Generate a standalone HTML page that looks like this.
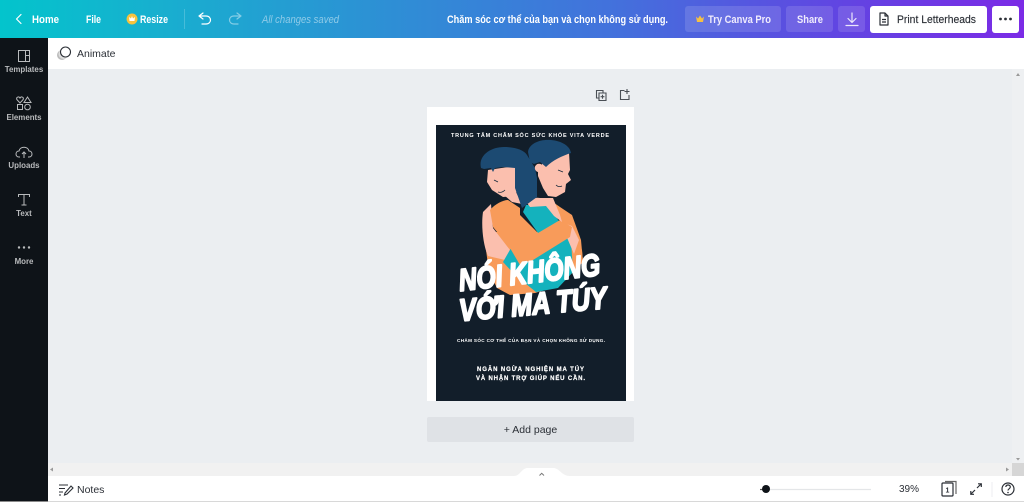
<!DOCTYPE html>
<html lang="vi"><head><meta charset="utf-8"><title>Canva</title>
<style>
html,body{margin:0;padding:0;width:1024px;height:502px;overflow:hidden;background:#ebeef1;font-family:"Liberation Sans","DejaVu Sans",sans-serif}
div,span{position:absolute;white-space:nowrap}
#top{left:0;top:0;width:1024px;height:38px;background:linear-gradient(90deg,#03c4cc 0%,#17b0cf 15%,#2b93d4 35%,#4371dc 60%,#6145e2 82%,#7b2be6 100%)}
.btn{top:6px;height:26px;border-radius:3px;background:rgba(255,255,255,.13)}
.wb{top:6px;height:27px;border-radius:3px;background:#fff}
.side{left:0;width:48px;text-align:center;color:#b9bbbd;font-size:7.9px;font-weight:bold;line-height:10px}
</style></head><body>
<div id="top"></div>
<div style="left:184px;top:9px;width:1px;height:20px;background:rgba(255,255,255,.2)"></div>
<div class="btn" style="left:685px;width:96px"></div>
<div class="btn" style="left:786px;width:47px"></div>
<div class="btn" style="left:838px;width:27px"></div>
<div class="wb" style="left:870px;width:117px"></div>
<div class="wb" style="left:992px;width:27px"></div>

<div style="left:0;top:38px;width:48px;height:464px;background:#0e1318"></div>
<div style="left:48px;top:38px;width:976px;height:31px;background:#fff"></div>
<div style="left:77px;top:47px;font-size:10.5px;line-height:14px;color:#2b2f36">Animate</div>

<div class="side" style="top:65px">Templates</div>
<div class="side" style="top:113px">Elements</div>
<div class="side" style="top:161px">Uploads</div>
<div class="side" style="top:209px">Text</div>
<div class="side" style="top:257px">More</div>

<div style="left:427px;top:107px;width:207px;height:294px;background:#fff"></div>
<div style="left:436px;top:125px;width:190px;height:276px;background:#121e2a"></div>
<div style="left:427px;top:417px;width:207px;height:25px;background:#dfe2e6;border-radius:2px"></div>
<div style="left:427px;top:423px;width:207px;text-align:center;font-size:10.5px;line-height:14px;color:#2b2f36">+ Add page</div>

<div style="left:48px;top:463px;width:976px;height:13px;background:#f1f1f1"></div>
<div style="left:1012px;top:69px;width:12px;height:394px;background:#eef0f2"></div>
<div style="left:1012px;top:463px;width:12px;height:13px;background:#d6d6d6"></div>
<div style="left:48px;top:476px;width:976px;height:25px;background:#fff"></div>
<div style="left:0;top:501px;width:48px;height:1px;background:#8a8a8a"></div>
<div style="left:48px;top:501px;width:976px;height:1px;background:#d8d8d8"></div>
<div style="left:77px;top:483px;font-size:10.5px;line-height:14px;color:#2b2f36">Notes</div>
<div style="left:899px;top:483px;font-size:10px;line-height:14px;color:#2b2f36">39%</div>

<svg style="position:absolute;left:0;top:0" width="1024" height="502" viewBox="0 0 1024 502">
 <!-- header text -->
 <g font-family="Liberation Sans" font-size="11" font-weight="bold" fill="#fff">
  <text x="32" y="23" textLength="27" lengthAdjust="spacingAndGlyphs">Home</text>
  <text x="86" y="23" textLength="15" lengthAdjust="spacingAndGlyphs">File</text>
  <text x="140" y="23" textLength="28" lengthAdjust="spacingAndGlyphs">Resize</text>
  <text x="447" y="23" textLength="221" lengthAdjust="spacingAndGlyphs">Chăm sóc cơ thể của bạn và chọn không sử dụng.</text>
  <text x="708" y="23" textLength="63" lengthAdjust="spacingAndGlyphs" fill="#f0ecfd">Try Canva Pro</text>
  <text x="797" y="23" textLength="26" lengthAdjust="spacingAndGlyphs" fill="#f0ecfd">Share</text>
 </g>
 <text x="262" y="23" font-family="Liberation Sans" font-size="11" font-style="italic" fill="#8fcbe8" textLength="77" lengthAdjust="spacingAndGlyphs">All changes saved</text>
 <text x="897" y="23" font-family="Liberation Sans" font-size="11" fill="#2b2f36" stroke="#2b2f36" stroke-width=".15" textLength="79" lengthAdjust="spacingAndGlyphs">Print Letterheads</text>
 <!-- header icons -->
 <g fill="none" stroke="#fff" stroke-width="1.200" stroke-linecap="round" stroke-linejoin="round">
  <path d="M21,14.500 L16.500,19 L21,23.500"/>
  <path d="M199,16 L203,13 M199,16 L203,19 M199,16 H206 C212,16 212,24 206,24 H202"/>
  <path opacity=".45" d="M241,16 L237,13 M241,16 L237,19 M241,16 H234 C228,16 228,24 234,24 H238"/>
  <path opacity=".85" d="M852,13 V22 M848,18.500 L852,22.500 L856,18.500 M846,25.500 H858"/>
 </g>
 <circle cx="132" cy="19" r="5.500" fill="#f6c33e"/><path d="M129.500,21 L129,17 L131,18.500 L132,16 L133,18.500 L135,17 L134.500,21 Z" fill="#fff"/>
 <path d="M696,16.500 L698,18.500 L700,15.500 L702,18.500 L704,16.500 L703,22 H697 Z" fill="#f5c044"/>
 <g fill="none" stroke="#2b2f36" stroke-width="1.200" stroke-linejoin="round">
  <path d="M880,13 H885 L888,16 V25 H880 Z M885,13 V16 H888"/><path d="M882,19.500 H886 M882,22 H886"/>
 </g>
 <circle cx="1000.500" cy="19" r="1.400" fill="#2b2f36"/><circle cx="1005.500" cy="19" r="1.400" fill="#2b2f36"/><circle cx="1010.500" cy="19" r="1.400" fill="#2b2f36"/>
 <!-- animate icon -->
 <circle cx="62" cy="55" r="5" fill="#bbb"/><circle cx="63.500" cy="54" r="5" fill="#ddd"/>
 <circle cx="65.500" cy="52" r="5" fill="#fff" stroke="#2b2f36" stroke-width="1.100"/>
 <!-- sidebar icons -->
 <g fill="none" stroke="#b9bbbd" stroke-width="1">
  <path d="M18.500,50.500 H29.500 V61.500 H18.500 Z M25.500,50.500 V61.500 M25.500,55.500 H29.500"/>
  <path d="M20,103 L16.800,99.500 C16,97 19,96 20,98 C21,96 24,97 23.200,99.500 Z"/>
  <path d="M27.500,97 L31,102.500 H24 Z"/>
  <path d="M17.500,104.500 H22.500 V109.500 H17.500 Z"/><circle cx="27.500" cy="107" r="2.800"/>
  <path d="M20,157 H19 C15,157 15,151 19,151 C20,146 28,146 29,151 C33,151 33,157 29,157 H28"/>
  <path d="M24,158 V152 M22,154 L24,152 L26,154"/>
  <path d="M18.500,197 V194.500 H29.500 V197 M24,194.500 V205 M21.500,205 H26.500"/>
 </g>
 <circle cx="19" cy="247.500" r="1.200" fill="#b9bbbd"/><circle cx="24" cy="247.500" r="1.200" fill="#b9bbbd"/><circle cx="29" cy="247.500" r="1.200" fill="#b9bbbd"/>
 <!-- page tools -->
 <g fill="none" stroke="#4a4f55" stroke-width="1.100">
  <path d="M599,98 H596.500 V90.500 H603 V92.500"/><path d="M599,93 H606 V100.500 H599 Z M602.500,94.800 V98.700 M600.600,96.700 H604.400"/>
  <path d="M624.500,90.500 H620.500 V99.500 H629 V95 M627,89 V94 M624.500,91.500 H629.500"/>
 </g>
 <!-- illustration -->
 <path d="M484,232 L572,232 L582,250 L583,262 L560,285 L535,293 L510,295 L497,288 L489,272 L486,250 Z" fill="#f89b5a"/>
 <path d="M547,198 L560,207 L572,215 L581,240 L583,262 L573,272 L573,240 Z" fill="#f89b5a"/>
 <path d="M483,212 C481,225 483,245 488,256 L505,260 L510,250 L493,228 L491,204 Z" fill="#fbbfae"/>
 <path d="M523,212 L526,205 L547,205 L562,225 L571,240 L573,272 L558,288 L536,292 L515,275 L503,262 L511,248 L538,233 Z" fill="#14b2bd"/>
 <path d="M560,222 L572,226 L579,240 L574,254 L568,240 Z" fill="#fbbfae"/>
 <path d="M490,210 C495,204 503,200 508,200 L520,208 L520,215 L538,233 L560,220 L572,227 L570,237 L533,260 L520,265 L510,248 L493,227 Z" fill="#f89b5a"/>
 <path d="M527,203 C530,199 535,197 540,198 L553,198 L560,215 L562,222 L554,216 L546,206 L530,207 Z" fill="#fbbfae"/>
 <!-- left face -->
 <path d="M488,170 L515,166 L517,190 L515,196 L503,197 L492,190 L487,182 Z" fill="#fbbfae"/>
 <path d="M504,195 L515,190 L522,204 L512,202 Z" fill="#fbbfae"/>
 <!-- left hair with central fall -->
 <path d="M481,168 C478,156 490,147 504,147 C515,147 524,150 527,155 L535,168 L537,178 L537,197 L522,208 L515,188 L515,168 L503,167 L495,168 L493,172 L491,168 L484,169 Z" fill="#1c4a72"/>
 <!-- right face -->
 <path d="M544,160 L569,152 L570,170 L568,174 L571,180 L566,184 L565,192 L556,197 L548,196 L543,188 L538,176 L538,172 Z" fill="#fbbfae"/>
 <circle cx="539" cy="168" r="4.200" fill="#fbbfae"/>
 <path d="M528,152 C529,143 541,139 551,140 C562,141 570,146 571,153 C562,156 553,160 546,167 L540,162 L534,164 L530,162 Z" fill="#1c4a72"/>
 <g fill="none" stroke="#16293b" stroke-width=".8">
  <path d="M494,180 L498,182 M498,192 C501,193 503,192 505,190"/>
  <path d="M558,170 L563,172 M556,185 C558,187 560,187 562,186"/>
 </g>
 <!-- bottom -->
 <path d="M514,476 C520,476 521,469 527,468 H554 C560,469 562,476 570,476 Z" fill="#fff"/>
 <path d="M539.500,475.500 L541.700,473.300 L544,475.500" fill="none" stroke="#777" stroke-width="1"/>
 <path d="M53,467.500 L50,469.500 L53,471.500 Z M1006,467.500 L1009,469.500 L1006,471.500 Z M1016,458 L1020,458 L1018,460.500 Z M1016,76 L1020,76 L1018,73 Z" fill="#999"/>
 <g fill="none" stroke="#2b2f36" stroke-width="1.100">
  <path d="M59,485 H68 M59,488.500 H65 M59,492 H63 M59,495 H61"/>
  <path d="M65,493 L71,486 L73,488 L67,494 L64.500,495 Z"/>
 </g>
 <path d="M766,489.500 H871" stroke="#e4e6e8" stroke-width="1.200"/>
 <path d="M760,489.500 H766" stroke="#555" stroke-width="1.200"/>
 <circle cx="766" cy="489" r="4" fill="#0e1318"/>
 <path d="M945,481.500 H956 V494" fill="none" stroke="#666" stroke-width="1.200"/>
 <rect x="942" y="483" width="11" height="13" rx="1" fill="#fff" stroke="#2b2f36" stroke-width="1.200"/>
 <text x="947.500" y="492.500" text-anchor="middle" font-size="7" font-weight="bold" fill="#2b2f36" font-family="Liberation Sans">1</text>
 <g fill="none" stroke="#2b2f36" stroke-width="1.200">
  <path d="M977,488 L981,484 M978,483.800 H981.300 V487 M975,490 L971,494 M970.800,491 V494.300 H974"/>
  <circle cx="1008" cy="489" r="6"/>
  <path d="M1005.800,487 C1006,484.300 1010.300,484.300 1010.300,487 C1010.300,488.800 1008,488.800 1008,490.500"/>
 </g>
 <circle cx="1008" cy="492.500" r=".8" fill="#2b2f36"/>
 <path d="M992,482 V497" stroke="#eceef0"/>
 <!-- poster text -->
 <g font-family="Liberation Sans" fill="#fff" font-weight="bold">
  <text x="451" y="137" font-size="5.500" textLength="158" lengthAdjust="spacing">TRUNG TÂM CHĂM SÓC SỨC KHỎE VITA VERDE</text>
  <g font-style="italic" stroke="#fff" stroke-width="2" stroke-linejoin="round" font-size="31">
   <text transform="translate(460,291) rotate(-6.500)" textLength="142" lengthAdjust="spacingAndGlyphs">NÓI KHÔNG</text>
   <text transform="translate(460,321) rotate(-5)" textLength="148" lengthAdjust="spacingAndGlyphs">VỚI MA TÚY</text>
  </g>
  <text x="457" y="342" font-size="4.600" textLength="148" lengthAdjust="spacing">CHĂM SÓC CƠ THỂ CỦA BẠN VÀ CHỌN KHÔNG SỬ DỤNG.</text>
  <text x="477" y="371" font-size="6" stroke="#fff" stroke-width=".2" textLength="107" lengthAdjust="spacing">NGĂN NGỪA NGHIỆN MA TÚY</text>
  <text x="476" y="380" font-size="6" stroke="#fff" stroke-width=".2" textLength="109" lengthAdjust="spacing">VÀ NHẬN TRỢ GIÚP NẾU CẦN.</text>
 </g>
</svg>
</body></html>
